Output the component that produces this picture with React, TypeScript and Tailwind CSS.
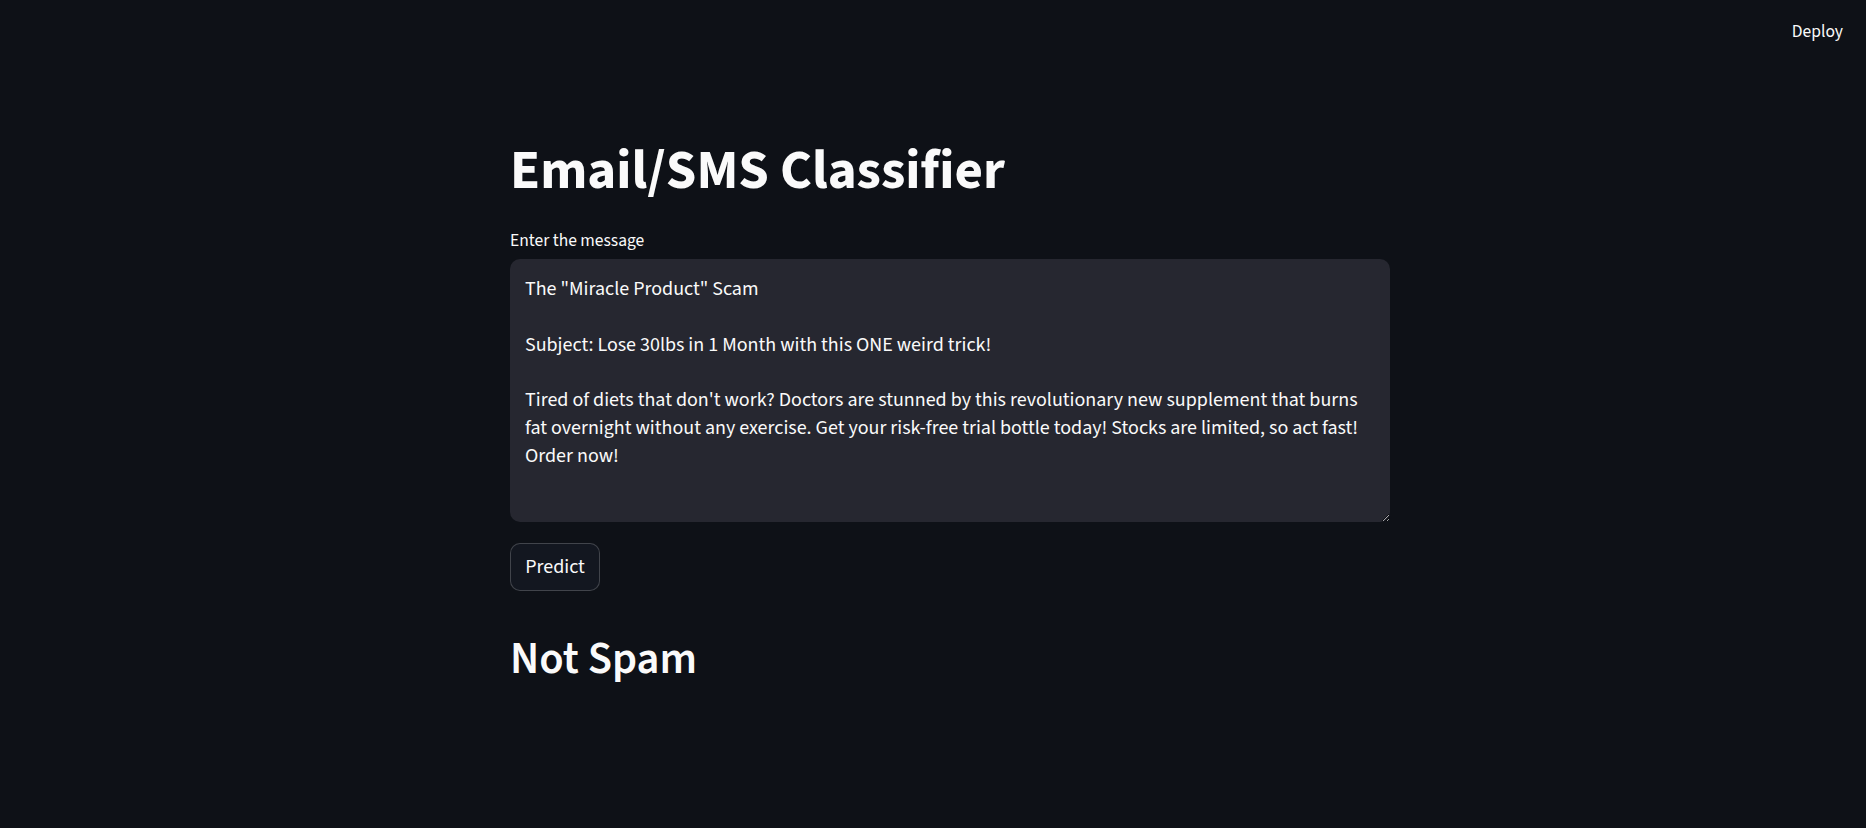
import React from "react";

const FONT = '"Source Sans 3", "Source Sans Pro", Lato, sans-serif';

const message = `The "Miracle Product" Scam

Subject: Lose 30lbs in 1 Month with this ONE weird trick!

Tired of diets that don't work? Doctors are stunned by this revolutionary new supplement that burns
fat overnight without any exercise. Get your risk-free trial bottle today! Stocks are limited, so act fast!
Order now!`;

export default function App() {
  return (
    <div
      className="min-h-[828px] w-full bg-[#0e1117] text-[#fafafa] relative"
      style={{ fontFamily: FONT }}
    >
      <header className="h-[64px] flex items-center justify-end pr-[23px]">
        <span className="text-[17.5px] leading-none">Deploy</span>
      </header>
      <main className="w-[880px] mx-auto flex flex-col pt-[74px] translate-x-[17px]">
        <h1 className="text-[55px] font-bold leading-[66px]">
          Email/SMS Classifier
        </h1>
        <label className="mt-[23px] text-[17.5px] leading-[28px]">Enter the message</label>
        <textarea
          className="mt-[4px] h-[263px] w-[880px] rounded-[10px] bg-[#262730] pt-[17px] pl-[15px] pr-[16px] text-[20px] leading-[27.8px] text-[#fafafa] outline-none whitespace-pre overflow-hidden"
          style={{ fontFamily: FONT }}
          wrap="off"
          defaultValue={message}
        />
        <div className="mt-[21px]">
          <button className="h-[48px] w-[90px] rounded-[10px] border border-[rgba(250,250,250,0.2)] bg-[#131720] text-[20px] text-[#fafafa]">
            Predict
          </button>
        </div>
        <h2 className="mt-[41px] text-[44.5px] font-semibold leading-[54px]">Not Spam</h2>
      </main>
    </div>
  );
}
